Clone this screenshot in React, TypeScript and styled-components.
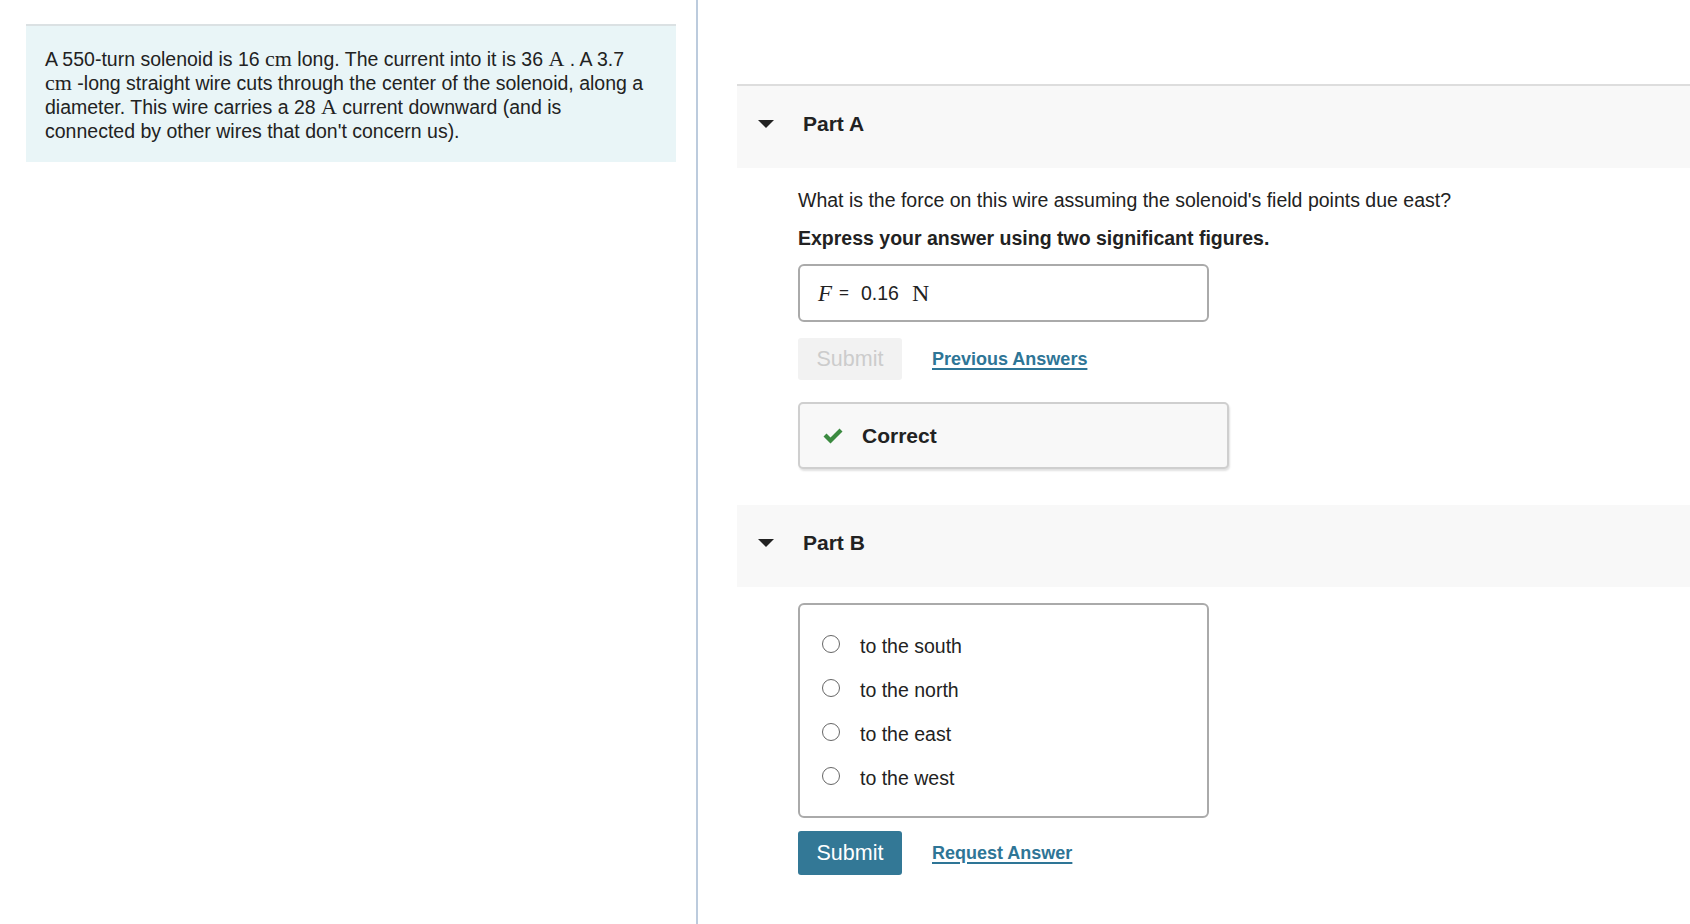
import styled, { createGlobalStyle } from "styled-components";

const GlobalStyle = createGlobalStyle`
  body {
    margin: 0;
    background: #ffffff;
    font-family: "Liberation Sans", Arial, Helvetica, sans-serif;
    color: #222222;
  }
`;

const Page = styled.div`
  display: flex;
  min-height: 924px;
`;

const LeftColumn = styled.div`
  width: 698px;
  flex-shrink: 0;
  padding: 24px 20px 0 26px;
  box-sizing: border-box;
  border-right: 2px solid #bccbdd;
`;

const Problem = styled.div`
  background: #e9f5f7;
  border-top: 2px solid #dbe1e3;
  padding: 21px 24px 19px 19px;
  font-size: 19.5px;
  line-height: 24px;
  color: #222;
`;

const MathText = styled.span<{ $italic?: boolean; $size?: number }>`
  font-family: "Liberation Serif", "DejaVu Serif", serif;
  font-size: ${(p) => p.$size ?? 22}px;
  line-height: 1;
  font-style: ${(p) => (p.$italic ? "italic" : "normal")};
`;

const RightColumn = styled.div`
  flex: 1;
  padding: 84px 0 0 39px;
`;

const PartHeader = styled.div<{ $border?: boolean }>`
  display: flex;
  align-items: center;
  gap: 29px;
  height: ${(p) => (p.$border ? 84 : 82)}px;
  padding: 0 0 6px 21px;
  box-sizing: border-box;
  background: #f8f8f8;
  border-top: ${(p) => (p.$border ? "2px solid #dddddd" : "none")};
  font-size: 21px;
  font-weight: bold;
  color: #222;
`;

const Caret = styled.span`
  width: 0;
  height: 0;
  border-left: 8px solid transparent;
  border-right: 8px solid transparent;
  border-top: 8px solid #222;
`;

const PartBody = styled.div`
  padding: 21px 0 36px 61px;
`;

const Question = styled.p`
  margin: 0;
  font-size: 19.5px;
  line-height: 22px;
  color: #222;
`;

const Instruction = styled.p`
  margin: 16px 0 0;
  font-size: 19.5px;
  line-height: 22px;
  font-weight: bold;
  color: #222;
`;

const AnswerInput = styled.div`
  display: flex;
  align-items: center;
  width: 411px;
  height: 58px;
  margin-top: 15px;
  padding-left: 18px;
  box-sizing: border-box;
  border: 2px solid #aaaaaa;
  border-radius: 6px;
  background: #fff;
`;

const Equals = styled.span`
  font-size: 17px;
  margin: 0 12px 0 7px;
`;

const Value = styled.span`
  font-size: 19.5px;
  margin-right: 13px;
`;

const Actions = styled.div<{ $top: number }>`
  display: flex;
  align-items: center;
  gap: 30px;
  margin-top: ${(p) => p.$top}px;
`;

const SubmitButton = styled.button<{ $disabled?: boolean }>`
  width: 104px;
  height: ${(p) => (p.$disabled ? 42 : 44)}px;
  border: none;
  border-radius: 3px;
  font-family: inherit;
  font-size: 21.5px;
  background: ${(p) => (p.$disabled ? "#f2f2f2" : "#337896")};
  color: ${(p) => (p.$disabled ? "#cccccc" : "#ffffff")};
  cursor: ${(p) => (p.$disabled ? "default" : "pointer")};
`;

const TextLink = styled.a`
  font-size: 18px;
  font-weight: bold;
  color: #2e7596;
  text-decoration: underline;
  text-underline-offset: 3px;
  text-decoration-thickness: 2px;
  cursor: pointer;
`;

const Feedback = styled.div`
  display: flex;
  align-items: center;
  gap: 18px;
  width: 431px;
  height: 67px;
  margin-top: 22px;
  padding-left: 22px;
  box-sizing: border-box;
  background: #f8f8f8;
  border: 2px solid #cfcfcf;
  border-radius: 5px;
  box-shadow: 1px 2px 2px rgba(0, 0, 0, 0.12);
  font-size: 21px;
  font-weight: bold;
  color: #222;
`;

const Options = styled.div`
  display: flex;
  flex-direction: column;
  gap: 22px;
  width: 411px;
  height: 215px;
  padding: 30px 0 0 22px;
  box-sizing: border-box;
  border: 2px solid #aaaaaa;
  border-radius: 6px;
`;

const Option = styled.label`
  display: flex;
  align-items: center;
  gap: 20px;
  height: 22px;
  font-size: 19.5px;
  color: #222;
  cursor: pointer;
`;

const Radio = styled.span`
  width: 18px;
  height: 18px;
  border: 1.5px solid #666;
  border-radius: 50%;
  box-sizing: border-box;
  margin-top: -4px;
`;

const BodyB = styled.div`
  padding: 16px 0 0 61px;
`;

function CheckIcon() {
  return (
    <svg width="22" height="18" viewBox="0 0 22 18">
      <path d="M1.5 9.5 L4.5 6.5 L8.5 10.5 L17.5 1.5 L20.5 4.5 L8.5 16.5 Z" fill="#3b8a40" />
    </svg>
  );
}

const options = ["to the south", "to the north", "to the east", "to the west"];

export default function App() {
  return (
    <>
      <GlobalStyle />
      <Page>
        <LeftColumn>
          <Problem>
            A 550-turn solenoid is 16 <MathText>cm</MathText> long. The current into it is 36{" "}
            <MathText>A</MathText> . A 3.7 <MathText>cm</MathText> -long straight wire cuts
            through the center of the solenoid, along a diameter. This wire carries a 28{" "}
            <MathText>A</MathText> current downward (and is connected by other wires that don't
            concern us).
          </Problem>
        </LeftColumn>
        <RightColumn>
          <PartHeader $border>
            <Caret />
            Part A
          </PartHeader>
          <PartBody>
            <Question>
              What is the force on this wire assuming the solenoid's field points due east?
            </Question>
            <Instruction>Express your answer using two significant figures.</Instruction>
            <AnswerInput>
              <MathText $italic $size={23}>F</MathText>
              <Equals>=</Equals>
              <Value>0.16</Value>
              <MathText $size={24}>N</MathText>
            </AnswerInput>
            <Actions $top={16}>
              <SubmitButton $disabled>Submit</SubmitButton>
              <TextLink>Previous Answers</TextLink>
            </Actions>
            <Feedback>
              <CheckIcon />
              Correct
            </Feedback>
          </PartBody>
          <PartHeader>
            <Caret />
            Part B
          </PartHeader>
          <BodyB>
            <Options>
              {options.map((o) => (
                <Option key={o}>
                  <Radio />
                  {o}
                </Option>
              ))}
            </Options>
            <Actions $top={13}>
              <SubmitButton>Submit</SubmitButton>
              <TextLink>Request Answer</TextLink>
            </Actions>
          </BodyB>
        </RightColumn>
      </Page>
    </>
  );
}
